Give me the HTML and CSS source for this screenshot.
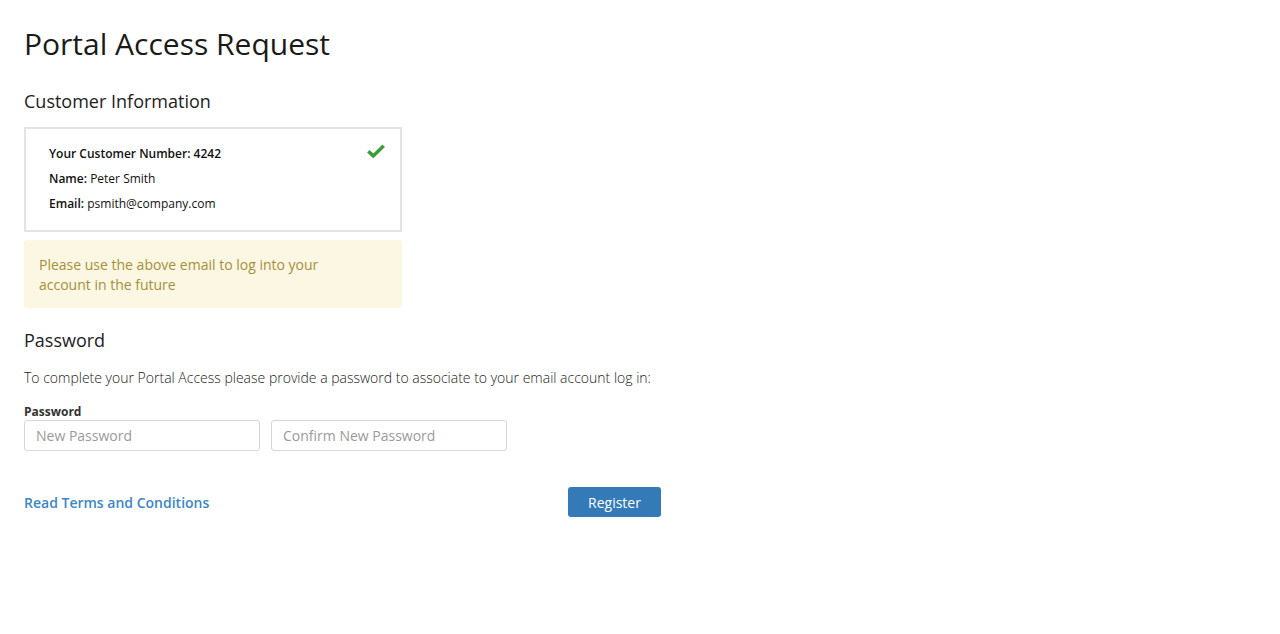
FILE: index.html
```html
<!DOCTYPE html>
<html lang="en">
<head>
<meta charset="utf-8">
<title>Portal Access Request</title>
<link rel="stylesheet" href="styles.css">
</head>
<body>
<main class="page">
  <h1 class="title">Portal Access Request</h1>

  <h2 class="section-title">Customer Information</h2>
  <div class="info-card">
    <div class="info-lines">
      <p class="info-line info-strong">Your Customer Number: 4242</p>
      <p class="info-line"><b>Name:</b> Peter Smith</p>
      <p class="info-line"><b>Email:</b> psmith@company.com</p>
    </div>
    <svg class="check" width="18" height="14" viewBox="0 0 18 14" aria-hidden="true">
      <path d="M1.3 7.2 L6.3 11.9 L16.7 1.7" fill="none" stroke="#3a9c3a" stroke-width="3.5" stroke-linejoin="miter" stroke-linecap="butt"/>
    </svg>
  </div>
  <div class="alert">
    <p class="alert-text">Please use the above email to log into your account in the future</p>
  </div>

  <h2 class="section-title pw-title">Password</h2>
  <p class="intro">To complete your Portal Access please provide a password to associate to your email account log in:</p>
  <label class="field-label">Password</label>
  <div class="inputs">
    <input class="input" type="password" placeholder="New Password">
    <input class="input" type="password" placeholder="Confirm New Password">
  </div>

  <div class="actions">
    <a class="terms" href="#">Read Terms and Conditions</a>
    <button class="btn" type="button">Register</button>
  </div>
</main>
</body>
</html>
```

FILE: styles.css
```css
* { box-sizing: border-box; }
html, body { margin: 0; padding: 0; background: #fff; }
body {
  font-family: "Open Sans", "Liberation Sans", sans-serif;
  color: #222;
}
.page {
  padding: 24px 24px 0 24px;
}
.title {
  margin: 0;
  font-size: 30px;
  font-weight: 400;
  line-height: 40px;
  color: #1a1a1a;
}
.section-title {
  margin: 25px 0 0 0;
  font-size: 18px;
  font-weight: 400;
  line-height: 24px;
  color: #222;
}
.info-card {
  margin-top: 14px;
  width: 378px;
  border: 2px solid #e3e3e3;
  padding: 12px 15px 14px 23px;
  display: flex;
  justify-content: space-between;
  align-items: flex-start;
}
.info-line {
  margin: 0;
  font-size: 12px;
  line-height: 25px;
  color: #111;
}
.info-line b, .info-strong { font-weight: 600; }
.check { margin-top: 3px; }
.alert {
  margin-top: 8px;
  width: 378px;
  background: #fcf7e3;
  border-radius: 3px;
  padding: 15px 15px 13px 15px;
}
.alert-text {
  margin: 0;
  max-width: 300px;
  font-size: 14px;
  line-height: 20px;
  color: #a68f3a;
}
.pw-title { margin-top: 20px; }
.intro {
  margin: 16px 0 0 0;
  font-size: 14px;
  font-weight: 300;
  line-height: 20px;
  color: #222;
}
.field-label {
  display: block;
  margin-top: 16px;
  font-size: 12px;
  font-weight: 700;
  line-height: 16px;
  color: #333;
}
.inputs {
  display: flex;
  gap: 11px;
  margin-top: 0;
}
.input {
  width: 236px;
  height: 31px;
  border: 1px solid #d6d6d6;
  border-radius: 3px;
  padding: 0 11px;
  font-family: "Open Sans", "Liberation Sans", sans-serif;
  font-size: 14px;
  color: #333;
  background: #fff;
  outline: none;
}
.input::placeholder { color: #9a9a9a; opacity: 1; }
.actions {
  width: 637px;
  margin-top: 36px;
  display: flex;
  justify-content: space-between;
  align-items: center;
}
.terms {
  font-size: 14px;
  font-weight: 600;
  color: #3a87c8;
  text-decoration: none;
}
.btn {
  width: 93px;
  height: 30px;
  border: none;
  border-radius: 3px;
  background: #337ab7;
  color: #fff;
  font-family: "Open Sans", "Liberation Sans", sans-serif;
  font-size: 14px;
  padding: 0;
  cursor: pointer;
}
```
